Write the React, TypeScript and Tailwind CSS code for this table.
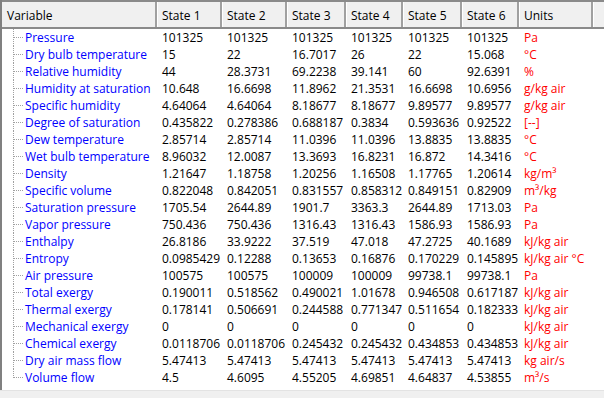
type Row = { name: string; values: string[]; unit: string };

const rows: Row[] = [
  { name: 'Pressure', values: ['101325', '101325', '101325', '101325', '101325', '101325'], unit: 'Pa' },
  { name: 'Dry bulb temperature', values: ['15', '22', '16.7017', '26', '22', '15.068'], unit: '°C' },
  { name: 'Relative humidity', values: ['44', '28.3731', '69.2238', '39.141', '60', '92.6391'], unit: '%' },
  { name: 'Humidity at saturation', values: ['10.648', '16.6698', '11.8962', '21.3531', '16.6698', '10.6956'], unit: 'g/kg air' },
  { name: 'Specific humidity', values: ['4.64064', '4.64064', '8.18677', '8.18677', '9.89577', '9.89577'], unit: 'g/kg air' },
  { name: 'Degree of saturation', values: ['0.435822', '0.278386', '0.688187', '0.3834', '0.593636', '0.92522'], unit: '[--]' },
  { name: 'Dew temperature', values: ['2.85714', '2.85714', '11.0396', '11.0396', '13.8835', '13.8835'], unit: '°C' },
  { name: 'Wet bulb temperature', values: ['8.96032', '12.0087', '13.3693', '16.8231', '16.872', '14.3416'], unit: '°C' },
  { name: 'Density', values: ['1.21647', '1.18758', '1.20256', '1.16508', '1.17765', '1.20614'], unit: 'kg/m³' },
  { name: 'Specific volume', values: ['0.822048', '0.842051', '0.831557', '0.858312', '0.849151', '0.82909'], unit: 'm³/kg' },
  { name: 'Saturation pressure', values: ['1705.54', '2644.89', '1901.7', '3363.3', '2644.89', '1713.03'], unit: 'Pa' },
  { name: 'Vapor pressure', values: ['750.436', '750.436', '1316.43', '1316.43', '1586.93', '1586.93'], unit: 'Pa' },
  { name: 'Enthalpy', values: ['26.8186', '33.9222', '37.519', '47.018', '47.2725', '40.1689'], unit: 'kJ/kg air' },
  { name: 'Entropy', values: ['0.0985429', '0.12288', '0.13653', '0.16876', '0.170229', '0.145895'], unit: 'kJ/kg air °C' },
  { name: 'Air pressure', values: ['100575', '100575', '100009', '100009', '99738.1', '99738.1'], unit: 'Pa' },
  { name: 'Total exergy', values: ['0.190011', '0.518562', '0.490021', '1.01678', '0.946508', '0.617187'], unit: 'kJ/kg air' },
  { name: 'Thermal exergy', values: ['0.178141', '0.506691', '0.244588', '0.771347', '0.511654', '0.182333'], unit: 'kJ/kg air' },
  { name: 'Mechanical exergy', values: ['0', '0', '0', '0', '0', '0'], unit: 'kJ/kg air' },
  { name: 'Chemical exergy', values: ['0.0118706', '0.0118706', '0.245432', '0.245432', '0.434853', '0.434853'], unit: 'kJ/kg air' },
  { name: 'Dry air mass flow', values: ['5.47413', '5.47413', '5.47413', '5.47413', '5.47413', '5.47413'], unit: 'kg air/s' },
  { name: 'Volume flow', values: ['4.5', '4.6095', '4.55205', '4.69851', '4.64837', '4.53855'], unit: 'm³/s' },
];

// widths of the state columns, left to right
const stateWidths = ['w-[65px]', 'w-[65px]', 'w-[59px]', 'w-[57px]', 'w-[59px]', 'w-[57px]'];

function HeaderCell({ label, width, first }: { label: string; width: string; first?: boolean }) {
  return (
    <div
      className={`${width} shrink-0 h-full flex items-center pt-[2px] border-r-2 border-[#a0a0a0] ${
        first ? 'pl-[5px]' : 'border-l border-l-white pl-[4px]'
      }`}
    >
      {label}
    </div>
  );
}

export default function App() {
  return (
    <div className="w-[604px] h-[398px] bg-white text-[12px] text-black overflow-hidden flex flex-col font-['Open_Sans',sans-serif]">
      <div className="h-[390px] flex flex-col border-l-2 border-[#808080]">
        {/* header */}
        <div className="h-[29px] flex border-t-2 border-b-2 border-[#8a8a8a] bg-[#f0f0f0] whitespace-nowrap">
          <HeaderCell label="Variable" width="w-[155px]" first />
          {['State 1', 'State 2', 'State 3', 'State 4', 'State 5', 'State 6'].map((s, i) => (
            <HeaderCell key={s} label={s} width={stateWidths[i]} />
          ))}
          <HeaderCell label="Units" width="w-[74px]" />
          <div className="flex-1 border-l border-l-white" />
        </div>

        {/* rows */}
        <div className="flex flex-col">
          {rows.map((r, idx) => {
            const last = idx === rows.length - 1;
            return (
              <div key={r.name} className="h-[17px] flex items-center whitespace-nowrap leading-[17px]">
                <div className="w-[155px] shrink-0 h-full flex">
                  <div className="relative w-[23px] h-full shrink-0">
                    <div
                      className={`absolute left-[11px] top-0 border-l border-dotted border-[#a0a0a0] ${
                        last ? 'h-[9px]' : 'bottom-0'
                      }`}
                    />
                    <div className="absolute left-[12px] top-[8px] w-[9px] border-t border-dotted border-[#a0a0a0]" />
                  </div>
                  <span className="text-[#0000ff]">{r.name}</span>
                </div>
                {r.values.map((v, i) => (
                  <div key={i} className={`${stateWidths[i]} shrink-0 pl-[5px]`}>
                    {v}
                  </div>
                ))}
                <div className="pl-[5px] text-[#ff0000]">{r.unit}</div>
              </div>
            );
          })}
        </div>
      </div>
      <div className="flex-1 bg-[#f0f0f0] border-t border-[#e3e3e3]" />
    </div>
  );
}
